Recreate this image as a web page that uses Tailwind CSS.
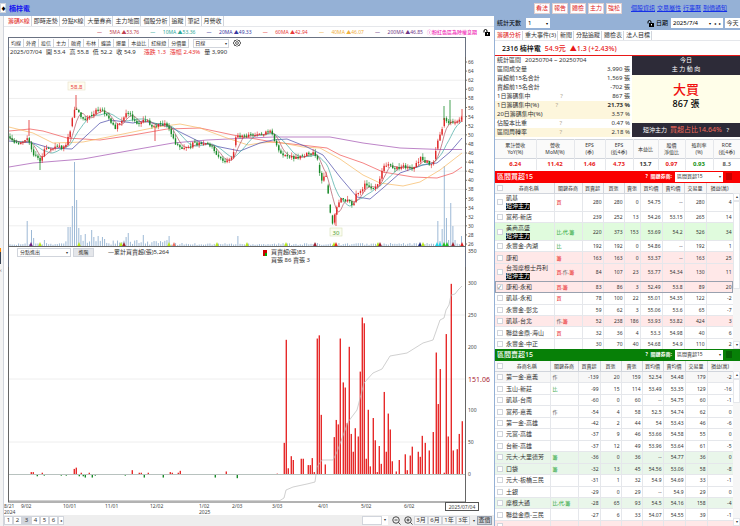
<!DOCTYPE html>
<html lang="zh-Hant">
<head>
  <meta charset="utf-8" />
  <meta name="viewport" content="width=device-width, initial-scale=1" />
  <title>楠梓電 籌碼K線</title>
  <script src="https://cdn.jsdelivr.net/npm/@tailwindcss/browser@4"></script>
</head>
<body class="bg-white font-['Noto_Sans','Noto_Sans_CJK_TC',sans-serif] text-[6px] leading-[9px] text-[#333] whitespace-nowrap overflow-hidden">
  <!-- Header -->
  <header class="flex items-center h-4 bg-[#95b1d6]">
    <button class="w-[6px] h-[10px] bg-white border border-gray-300 text-[5px] leading-[8px] text-black">♦</button>
    <h1 class="ml-[3px] text-[7px] font-bold text-[#1414f0]">楠梓電</h1>
    <div class="ml-auto w-[206px] flex items-center">
      <nav class="flex gap-[2px]">
        <button class="w-4 h-[11px] bg-white border border-[#e0d0d0] text-[#e02020]">看法</button>
        <button class="w-4 h-[11px] bg-white border border-[#e0d0d0] text-[#e02020]">報告</button>
        <button class="w-4 h-[11px] bg-white border border-[#e0d0d0] text-[#e02020]">體檢</button>
        <button class="w-4 h-[11px] bg-white border border-[#e0d0d0] text-[#e02020]">主力</button>
        <button class="w-4 h-[11px] bg-white border border-[#e0d0d0] text-[#e02020]">強松</button>
      </nav>
      <nav class="ml-[9px] flex gap-[2px] underline text-[#1530e8]">
        <a href="#">個股資訊</a><a href="#">交易屬性</a><a href="#">行事曆</a><a href="#">到價通知</a>
      </nav>
    </div>
  </header>

  <div class="flex">
    <!-- Left edge strip -->
    <div class="w-1 shrink-0 border-r border-gray-300 bg-[#f4f4f4] flex flex-col">
      <div class="mt-[232px] w-px h-1 bg-orange-400"></div>
      <div class="w-px h-3 bg-gray-700"></div>
      <div class="text-[5px] leading-[12px]">‹</div>
    </div>

    <!-- Chart side -->
    <main class="flex-1 min-w-0">
      <nav class="flex h-[11px] border-b border-gray-200 pl-[2px]">
        <button class="pl-[2px] pr-px text-[#e02020] border-r border-gray-300">籌碼K線</button>
        <button class="pl-[2px] pr-px border-r border-gray-300">即時走勢</button>
        <button class="pl-[2px] pr-px border-r border-gray-300">分點K線</button>
        <button class="pl-[2px] pr-px border-r border-gray-300">大量券商</button>
        <button class="pl-[2px] pr-px border-r border-gray-300">主力地圖</button>
        <button class="pl-[2px] pr-px border-r border-gray-300">個股分析</button>
        <button class="pl-[2px] pr-px border-r border-gray-300">追蹤</button>
        <button class="pl-[2px] pr-px border-r border-gray-300">筆記</button>
        <button class="pl-[2px] pr-px border-r border-gray-300">月營收</button>
      </nav>

      <!-- Moving average legend -->
      <div class="flex items-center h-[10px] pl-[93px] pr-1 text-[5px]">
        <div class="flex flex-1 justify-between pr-1">
          <span class="text-[#c04050]">—&emsp;&ensp;5MA ▲53.76</span>
          <span class="text-[#30a898]">—&emsp;&ensp;10MA ▲53.36</span>
          <span class="text-[#3838a0]">—&emsp;&ensp;20MA ▲49.33</span>
          <span class="text-[#e83838]">—&emsp;&ensp;60MA ▲42.94</span>
          <span class="text-[#f0b040]">—&emsp;&ensp;40MA ▲46.07</span>
          <span class="text-[#703888]">—&emsp;&ensp;200MA ▲46.85</span>
        </div>
        <span class="font-medium text-[#f030b8]">ⓘ粉紅色區為除權息期</span>
        <svg class="ml-[6px] w-[7px] h-[7px]" viewBox="0 0 14 14"><path d="M2 7V4a3 3 0 0 1 6 0v3" fill="none" stroke="#000" stroke-width="2"/><rect x="4" y="6" width="10" height="8" fill="#000"/><rect x="8" y="8" width="2" height="3" fill="#fff"/></svg>
      </div>

      <div class="ml-1 mr-7 h-5 border-t border-x border-gray-500">
        <div class="flex items-center h-[10px] text-[5px]">
          <button class="px-[2px] h-[9px] border-r border-b border-gray-300">均線</button>
          <button class="px-[2px] h-[9px] border-r border-b border-gray-300">外資</button>
          <button class="px-[2px] h-[9px] border-r border-b border-gray-300">投信</button>
          <button class="px-[2px] h-[9px] border-r border-b border-gray-300">主力</button>
          <button class="px-[2px] h-[9px] border-r border-b border-gray-300">融資</button>
          <button class="px-[2px] h-[9px] border-r border-b border-gray-300">布林</button>
          <button class="px-[2px] h-[9px] border-r border-b border-gray-300">纏論</button>
          <button class="px-[2px] h-[9px] border-r border-b border-gray-300">爆量</button>
          <button class="px-[2px] h-[9px] border-r border-b border-gray-300">本益比</button>
          <button class="px-[2px] h-[9px] border-r border-b border-gray-300">紅綠燈</button>
          <button class="px-[2px] h-[9px] border-r border-b border-gray-300">分價量</button>
          <label class="flex items-center ml-1 w-9 h-[9px] px-px border border-gray-300"><select aria-label="週期" class="appearance-none flex-1 min-w-0"><option>日線</option></select><span class="text-[4px]">▾</span></label>
          <svg class="ml-1 w-2 h-2" viewBox="0 0 16 16" fill="none" stroke="#333" stroke-width="1.6"><path d="M8 1l2 2 3 0 .5 3L16 8l-2.500 2-.5 3-3 0-2 2-2-2-3 0-.5-3L0 8l2.500-2 .5-3 3 0z"/><circle cx="8" cy="8" r="2.800"/></svg>
        </div>
        <div class="flex pl-px gap-1">
          <span>2025/07/04</span><span>開 53.4</span><span>高 55.8</span><span>低 52.2</span><span>收 54.9</span>
          <span class="pl-1 text-[#e83030]">漲跌 1.3</span><span class="text-[#e83030]">漲幅 2.43%</span><span>量 3,990</span>
        </div>
      </div>
      <svg id="kline" class="block w-full" viewBox="4 57 490 190" font-size="5"></svg>

      <div class="flex h-5 text-[#333]">
        <div class="flex-1 ml-1 border-x border-gray-500 flex items-start pt-px pl-2">
          <label class="flex items-center w-[54px] h-[9px] px-[2px] border border-gray-300 text-[5px]"><select aria-label="指標" class="appearance-none flex-1 min-w-0"><option>分點進出</option></select><span class="text-[4px]">▾</span></label>
          <button class="ml-[2px] w-[21px] h-[9px] bg-[#e4e6ea] border border-gray-300 text-[5px] leading-[7px]">進階</button>
          <span class="ml-[14px]">—累計買賣超(張)5,264</span>
          <svg class="ml-[94px] mt-[2px] w-1 h-[6px]" viewBox="0 0 4 6"><rect width="4" height="6" fill="#0a0"/><path d="M0 0h4v3H2v3H0z" fill="#c00"/></svg>
          <div class="ml-1 leading-[8px]"><div>買賣超(張)83</div><div>買張 86 賣張 3</div></div>
        </div>
        <div class="w-7 pl-[2px] text-[5px]">350</div>
      </div>
      <svg id="flow" class="block w-full" viewBox="4 267 490 248" font-size="5"></svg>

      <footer class="flex items-center h-[11px] bg-[#eee] pr-[2px]">
        <div class="flex text-center">
          <button class="w-[9px] h-[9px] leading-[7px] bg-white border border-gray-300">1</button>
          <button class="w-[9px] h-[9px] leading-[7px] bg-white border border-gray-300">2</button>
          <button class="w-[9px] h-[9px] leading-[7px] bg-gray-300 border border-gray-300">3</button>
          <button class="w-[9px] h-[9px] leading-[7px] bg-white border border-gray-300">4</button>
          <button class="w-[9px] h-[9px] leading-[7px] bg-white border border-gray-300">5</button>
          <button class="w-[9px] h-[9px] leading-[7px] bg-white border border-gray-300">6</button>
          <button class="w-[6px] h-[9px] leading-[7px] bg-white border border-gray-300 text-[4px]">◂</button>
        </div>
        <div class="ml-auto flex items-center">
          <input aria-label="股票代號" class="w-[20px] h-[9px] bg-white border border-gray-300" />
          <span class="w-[6px] h-[9px] leading-[8px] bg-white text-center text-[4px]">▾</span>
          <button aria-label="縮小" class="ml-[2px] w-[12px] h-[9px] flex justify-center"><svg class="w-[9px] h-[9px]" viewBox="0 0 18 18" fill="none" stroke="#222" stroke-width="1.6"><circle cx="8" cy="8" r="6.500"/><path d="M13 13l4 4M5 8h6"/></svg></button>
          <button aria-label="放大" class="w-[12px] h-[9px] flex justify-center"><svg class="w-[9px] h-[9px]" viewBox="0 0 18 18" fill="none" stroke="#222" stroke-width="1.6"><circle cx="8" cy="8" r="6.500"/><path d="M13 13l4 4M5 8h6M8 5v6"/></svg></button>
          <button class="w-[14px] h-[9px] leading-[7px] bg-[#f8f8f8] border border-gray-300">3月</button>
          <button class="w-[14px] h-[9px] leading-[7px] bg-[#f8f8f8] border border-gray-300">6月</button>
          <button class="w-[14px] h-[9px] leading-[7px] bg-[#f8f8f8] border border-gray-300">1年</button>
          <button class="w-[14px] h-[9px] leading-[7px] bg-[#f8f8f8] border border-gray-300">3年</button>
          <span class="w-[7px] text-center text-[4px]">▾</span>
          <button class="w-[15px] h-[9px] leading-[7px] bg-gray-300 border border-gray-400">查價</button>
        </div>
      </footer>
    </main>

    <!-- Broker side -->
    <aside class="w-[246px] shrink-0 border-l border-[#95b1d6]">
      <div class="flex items-center h-[14px] pl-[2px] bg-[#95b1d6] text-black">
        <label for="days">統計天數</label>
        <span class="flex items-center ml-[5px] w-6 h-[10px] px-[2px] bg-white"><select id="days" class="appearance-none flex-1 min-w-0"><option>1</option></select><span class="text-[4px]">▾</span></span>
        <svg class="ml-auto w-[7px] h-[7px]" viewBox="0 0 14 14"><path d="M2 7V4a3 3 0 0 1 6 0v3" fill="none" stroke="#000" stroke-width="2"/><rect x="4" y="6" width="10" height="8" fill="#000"/><rect x="8" y="8" width="2" height="3" fill="#fff"/></svg>
        <label for="date" class="ml-[2px]">日期</label>
        <span class="flex items-center gap-[3px] ml-[3px] w-[52px] h-[10px] px-[2px] bg-white"><input id="date" value="2025/7/4" class="flex-1 min-w-0" /><span class="text-[4px]">▾</span><span class="text-[4px]">◂</span><span class="text-[4px]">▸</span></span>
        <button class="ml-[2px] w-[15px] h-[10px] bg-white text-[#333]">今天</button>
      </div>
      <nav class="flex h-[11px] pt-px border-b border-gray-200">
        <button class="pl-[2px] pr-px text-[#e02020] border-r border-gray-300">籌碼分析</button>
        <button class="pl-[2px] pr-px border-r border-gray-300">重大事件(3)</button>
        <button class="pl-[2px] pr-px border-r border-gray-300">新聞</button>
        <button class="pl-[2px] pr-px border-r border-gray-300">分點追蹤</button>
        <button class="pl-[2px] pr-px border-r border-gray-300">體檢表</button>
        <button class="pl-[2px] pr-px border-r border-gray-300">法人目標</button>
      </nav>
      <div class="flex items-center gap-1 h-[15px] pl-[7px] border-b border-[#e81818] text-[7px] font-medium">
        <span class="text-black">2316 楠梓電</span>
        <span class="text-[#e81818]">54.9元</span>
        <span class="text-[#e81818]">▲1.3 (+2.43%)</span>
      </div>

      <div class="flex">
        <div class="flex-1 pr-[2px]">
          <div class="flex gap-1 pl-[2px]"><span>統計區間</span><span>20250704 ~ 20250704</span></div>
          <dl id="stats"></dl>
        </div>
        <div class="w-[108px] flex flex-col text-center">
          <div class="h-[19px] bg-[#2d2b38] text-white"><div>今日</div><div>主 力 動 向</div></div>
          <div class="flex-1 bg-[#fffee9] pt-[7px]">
            <div class="text-[13px] leading-[15px] font-medium text-[#f01010]">大買</div>
            <div class="text-[9px] leading-[14px] font-medium text-black">867 張</div>
          </div>
          <div class="h-[14px] leading-[14px] bg-[#2d2b38] text-white">短沖主力 &nbsp;<span class="text-[#f06858] text-[7px]">買超占比14.64%</span> &nbsp; ?</div>
        </div>
      </div>

      <table class="w-full mt-[2px] table-fixed text-center border-collapse">
        <colgroup><col class="w-[41px]"><col class="w-[38px]"><col class="w-[31px]"><col class="w-[28px]"><col class="w-[25px]"><col class="w-[27px]"><col class="w-[28px]"><col class="w-[27px]"></colgroup>
        <thead class="text-[5px] leading-[7px] bg-[#fafafa]">
          <tr class="h-[19px] border-y border-gray-300">
            <th class="font-normal border-r border-gray-200">累計營收<br>YoY(%)</th><th class="font-normal border-r border-gray-200">營收<br>MoM(%)</th><th class="font-normal border-r border-gray-200">EPS<br>(季)</th><th class="font-normal border-r border-gray-200">EPS<br>(近4季)</th><th class="font-normal border-r border-gray-200">本益比</th><th class="font-normal border-r border-gray-200">股價<br>淨值比</th><th class="font-normal border-r border-gray-200">殖利率<br>(%)</th><th class="font-normal">ROE<br>(近4季)</th>
          </tr>
        </thead>
        <tbody class="font-bold">
          <tr class="h-[11px]">
            <td class="text-[#e81818] border-r border-gray-200">6.24</td><td class="text-[#e81818] border-r border-gray-200">11.42</td><td class="text-[#e81818] border-r border-gray-200">1.46</td><td class="text-[#e81818] border-r border-gray-200">4.73</td><td class="border-r border-gray-200">13.7</td><td class="text-[#e81818] border-r border-gray-200">0.97</td><td class="text-[#109010] border-r border-gray-200">0.93</td><td class="font-medium">8.3</td>
          </tr>
        </tbody>
      </table>

      <!-- Net buyers -->
      <section class="mt-px">
        <div class="flex items-center h-[12px] pl-[2px] pr-[8px] bg-[#fa0000] text-white">
          <h2 class="text-[7px] font-medium">區間買超15</h2>
          <label for="buyKey" class="ml-auto font-bold text-[5px]">? &nbsp;關鍵券商:</label>
          <span class="flex items-center ml-[3px] w-12 h-[10px] px-[2px] bg-white text-[#333] text-[5px]"><select id="buyKey" class="appearance-none flex-1 min-w-0"><option>區間買超15</option></select><span class="text-[4px]">▾</span></span>
          <span class="ml-[3px] w-[6px] h-[7px] bg-[#c80000]"></span>
        </div>
        <div class="flex h-[166px]">
          <div class="flex-1 overflow-hidden"><table id="buy" class="w-full h-[168px] table-fixed border-collapse text-right text-[5px] leading-[8px]">
            <colgroup><col class="w-[9px]"><col class="w-[50px]"><col class="w-[28px]"><col class="w-[21px]"><col class="w-[21px]"><col class="w-[16px]"><col class="w-[22px]"><col class="w-[22px]"><col class="w-[22px]"><col class="w-[27px]"></colgroup>
          </table></div>
          <div class="w-[7px] pt-[10px] bg-[#f6f6f6] flex flex-col text-[4px] text-center"><span class="bg-white border border-gray-200 leading-[6px]">▴</span><span class="h-[88px] bg-white border border-gray-200"></span><span class="mt-auto leading-[6px] bg-white border border-gray-200">▾</span></div>
        </div>
      </section>

      <!-- Net sellers -->
      <section>
        <div class="flex items-center h-[12px] pl-[2px] pr-[8px] bg-[#078007] text-white">
          <h2 class="text-[7px] font-medium">區間賣超15</h2>
          <label for="sellKey" class="ml-auto font-bold text-[5px]">? &nbsp;關鍵券商:</label>
          <span class="flex items-center ml-[3px] w-12 h-[10px] px-[2px] bg-white text-[#333] text-[5px]"><select id="sellKey" class="appearance-none flex-1 min-w-0"><option>區間賣超15</option></select><span class="text-[4px]">▾</span></span>
          <span class="ml-[3px] w-[6px] h-[7px] bg-[#056005]"></span>
        </div>
        <div class="flex h-[165px]">
          <div class="flex-1 overflow-hidden"><table id="sell" class="w-full h-[172px] table-fixed border-collapse text-right text-[5px] leading-[8px]">
            <colgroup><col class="w-[9px]"><col class="w-[46px]"><col class="w-[28px]"><col class="w-[22px]"><col class="w-[21px]"><col class="w-[21px]"><col class="w-[21px]"><col class="w-[22px]"><col class="w-[22px]"><col class="w-[26px]"></colgroup>
          </table></div>
          <div class="w-[7px] pt-[10px] bg-[#f6f6f6] flex flex-col text-[4px] text-center"><span class="bg-white border border-gray-200 leading-[6px]">▴</span><span class="h-[24px] bg-white border border-gray-200"></span><span class="mt-auto leading-[6px] bg-white border border-gray-200">▾</span></div>
        </div>
      </section>
    </aside>
  </div>

  <script>
    // Summary rows: label, value, hint, highlighted, bold
    const stats = [
      ['區間成交量', '3,990 張'], ['買超前15名合計', '1,569 張'], ['賣超前15名合計', '-702 張'],
      ['1日籌碼集中', '867 張', 1], ['1日籌碼集中(%)', '21.73 %', 1, 1, 1], ['20日籌碼集中(%)', '3.57 %', 0, 1],
      ['佔股本比重', '0.47 %', 1], ['區間周轉率', '2.18 %', 1, 1]
    ];
    document.getElementById('stats').innerHTML = stats.map(([k, v, q, hl, b]) => `
      <div class="flex pl-[2px] ${hl ? 'bg-[#fdf6dc]' : ''}"><dt class="flex-1">${k}</dt>
      <span class="w-[52px] text-[#b0a890]">${q ? '?' : ''}</span><dd class="${b ? 'font-bold ' : ''}w-[24px] flex justify-end">${v}</dd></div>`).join('');

    // Brokers: name, key tags, numbers, row tint, short-term tag, ticked
    const buy = [
      ['凱基', '買', '280,280,0,54.75,--,280,4', '', 1],
      ['富邦-新店', '', '239,252,13,54.26,53.15,265,14'],
      ['美商高盛', '比,代,籌', '220,373,153,53.69,54.2,526,34', 'g', 1],
      ['永豐金-內湖', '比', '192,192,0,54.86,--,192,1'],
      ['康和', '籌', '163,163,0,53.37,--,163,25', 'r'],
      ['台灣摩根士丹利', '買,作,籌', '84,107,23,53.77,54.34,130,11', 'r', 1],
      ['康和-永和', '買,籌', '83,86,3,52.49,53.8,89,20', 'r', 0, 1],
      ['凱基-永和', '買', '78,100,22,55.01,54.35,122,-2'],
      ['永豐金-彰北', '', '59,62,3,55.06,53.6,65,-7'],
      ['凱基-台北', '作,籌', '52,238,186,53.93,53.82,424,3', 'r'],
      ['聯益金鼎-海山', '買', '32,36,4,53.3,54.98,40,6'],
      ['永豐金-中正', '', '30,70,40,54.68,54.9,110,2']
    ];
    const sell = [
      ['第一金-嘉義', '作', '-139,20,159,52.54,54.48,179,-2', 'n'],
      ['玉山-新莊', '比', '-99,15,114,53.49,53.35,129,-16'],
      ['凱基-台南', '', '-60,0,60,--,54.75,60,-1'],
      ['富邦-嘉義', '作', '-54,4,58,52.5,54.74,62,0'],
      ['第一金-高雄', '', '-42,2,44,54,53.43,46,-6'],
      ['元富-高雄', '', '-37,9,46,53.66,54.58,55,0'],
      ['台新-高雄', '', '-37,12,49,53.96,53.64,61,-5'],
      ['元大-大里德芳', '籌', '-36,0,36,--,54.77,36,0', 'g2'],
      ['口袋', '籌', '-32,13,45,54.56,53.06,58,-8', 'g2'],
      ['元大-板橋三民', '', '-31,1,32,54.9,54.69,33,-1'],
      ['土銀', '', '-29,0,29,--,54.9,29,0'],
      ['摩根大通', '比,代,籌', '-28,65,93,54.5,54.16,158,-4', 'g2'],
      ['聯益金鼎-三民', '', '-27,6,33,54.07,54.55,39,-1'],
      ['', '', ',,,,,,', 'r']
    ];
    const tint = { g: 'bg-[#e0fbdd]', g2: 'bg-[#e9f6ea]', r: 'bg-[#ffe8e8]', n: 'bg-[#f7f7f7]' };
    function fill(id, heads, rows) {
      const th = heads.map(h => `<th class="font-normal text-center border-r border-gray-300">${h}</th>`).join('');
      const box = 'appearance-none block mx-auto w-[6px] h-[6px] bg-white border border-gray-300';
      const body = rows.map(([name, key, nums, t, tag, on]) => {
        const keyColor = /比|代/.test(key) || t === 'g2' ? 'text-[#18a030]' : id === 'sell' ? '' : 'text-[#e82020]';
        const tick = on
          ? '<span class="grid"><input type="checkbox" checked aria-label="' + name + '" class="' + box + ' col-start-1 row-start-1"><span class="col-start-1 row-start-1 text-center text-[5px] leading-[6px]">✓</span></span>'
          : '<input type="checkbox" aria-label="' + name + '" class="' + box + '">';
        return `<tr class="${tag ? 'h-[17px]' : 'h-[11px]'} ${tint[t] || ''} ${on ? 'outline outline-gray-400 -outline-offset-1' : ''} border-b border-gray-200">
          <td>${tick}</td>
          <td class="pl-[2px] text-left text-[6px] leading-[8px] border-r border-gray-200">${name}${tag ? '<br><span class="inline-block bg-black text-white leading-[7px]">短沖主力</span>' : ''}</td>
          <td class="pl-[2px] text-left border-r border-gray-200 ${keyColor}">${key.replace('作', '<span class="text-[#555]">作</span>')}</td>
          ${nums.split(',').map(n => `<td class="pr-px border-r border-gray-200">${n}</td>`).join('')}</tr>`;
      }).join('');
      document.getElementById(id).insertAdjacentHTML('beforeend',
        `<thead><tr class="h-[11px] bg-[#f8f8f8] border-b border-gray-300"><th><input type="checkbox" aria-label="全選" class="${box}"></th>${th}</tr></thead><tbody>${body}</tbody>`);
    }
    const heads = ['券商名稱', '關鍵券商', '買賣超', '買張', '賣張', '買均價', '賣均價', '交易量', '損益(萬)'];
    fill('buy', heads, buy);
    fill('sell', heads, sell);

    // ---- Candles ----
    const line = (x1, y1, x2, y2, c, w = 1) => `<path d="M${x1} ${y1}L${x2} ${y2}" stroke="${c}" stroke-width="${w}" fill="none"/>`;
    const poly = (pts, c, w = 0.7) => `<polyline points="${pts.map(p => p.join(',')).join(' ')}" fill="none" stroke="${c}" stroke-width="${w}"/>`;
    const text = (x, y, s, extra = '') => `<text x="${x}" y="${y}" fill="#444" ${extra}>${s}</text>`;
    const noise = i => { const v = Math.sin(i * 127.1) * 43758.5453; return v - Math.floor(v); };
    const at = (pts, x) => {
      const k = Math.max(1, pts.findIndex(p => p[0] >= x));
      const [a, b] = [pts[k - 1], pts[k]];
      return a[1] + (b[1] - a[1]) * (x - a[0]) / (b[0] - a[0]);
    };
    const path = [[9,140],[20,143],[28,139],[32,153],[40,160],[45,148],[65,147],[70,133],[74,108],[78,112],[85,122],[92,115],[100,108],[108,117],[115,128],[122,121],[128,112],[137,124],[144,119],[155,127],[163,124],[169,127],[175,143],[185,149],[195,143],[210,145],[218,158],[227,162],[233,155],[236,136],[246,136],[262,134],[271,132],[276,145],[281,155],[290,157],[295,158],[303,155],[314,154],[318,162],[321,180],[326,175],[328,192],[330,209],[333,224],[335,213],[341,199],[349,202],[352,207],[356,196],[365,185],[373,188],[380,180],[382,170],[388,163],[395,169],[405,166],[412,169],[420,158],[428,163],[434,163],[437,145],[442,128],[444,118],[450,124],[456,122],[463,115]];
    const RED = '#e02828', GREEN = '#188a28';
    const closes = [];
    for (let i = 0; i < 211; i++) {
      const x = 10 + i * 2.15;
      closes.push([x, at(path, x) + (noise(i) - 0.5) * 4]);
    }
    const ma = n => closes.map(([x], i) => {
      const s = closes.slice(Math.max(0, i - n + 1), i + 1);
      return [x.toFixed(1), (s.reduce((t, p) => t + p[1], 0) / s.length).toFixed(1)];
    });
    let k = '';
    for (let p = 62; p >= 30; p -= 4) k += line(9, 62 + (66 - p) * 4.55, 465, 62 + (66 - p) * 4.55, '#eee');
    for (let p = 66; p >= 26; p -= 2) {
      const y = 62 + (66 - p) * 4.55;
      k += line(465, y, 467, y, '#777') + text(468, y + 2, p);
    }
    // volume
    const spikes = [[28,221],[31,230],[33,238],[44,240],[68,227],[70,227],[72,206],[74,162],[77,200],[79,228],[81,235],[85,234],[92,230],[94,237],[98,236],[102,237],[105,239],[128,233],[126,237],[143,235],[154,241],[169,236],[237,236],[438,221],[440,241],[442,229],[444,166],[446,218],[448,240],[450,203],[453,226],[455,240],[462,236]];
    closes.forEach(([x], i) => {
      const s = spikes.find(p => Math.abs(p[0] - x) < 1.08);
      const y = s ? s[1] : 245 - noise(i + 7) * ((x > 60 && x < 170) ? 5 : 2);
      k += line(x, 247, x, y, '#9db9d6');
    });
    k += poly([[9,167],[33,163],[83,159],[133,150],[173,143],[207,140],[250,138],[273,137],[330,137],[363,143],[400,148],[440,149.500],[462,149.500]], '#a050b0');
    k += poly([[9,131],[30,129],[43,131],[67,138],[100,140],[133,135],[167,129],[200,128],[233,135],[250,138],[273,142],[310,146],[327,148],[340,155],[363,163],[383,172],[413,177],[437,178],[453,173],[462,167]], '#f05050');
    k += poly([[9,127],[33,133],[53,143],[83,142],[123,134],[157,127],[180,124],[200,128],[227,138],[248,145],[260,143],[277,142],[303,147],[320,148],[340,159],[363,175],[380,183],[403,186],[420,182],[440,170],[462,153]], '#f6b860');
    k += poly([[9,141],[33,143],[50,148],[72,149],[87,135],[100,123],[110,120],[133,123],[143,121],[170,127],[200,142],[220,147],[240,151],[260,143],[273,140],[287,139],[307,147],[323,155],[340,177],[357,197],[370,199],[383,188],[400,173],[423,165],[437,163],[450,152],[462,138]], '#4848a8');
    k += poly(ma(10), '#40a8a0') + poly(ma(5), '#b05060');
    closes.forEach(([x, c], i) => {
      const o = i ? closes[i - 1][1] : c - 2;
      const col = c <= o ? RED : GREEN;
      const h = Math.min(Math.max(Math.abs(o - c), 1), 8);
      const top = c <= o ? c : c - h;
      k += line(x, top - noise(i + 3) * 4, x, top + h + noise(i + 5) * 3, col, 0.6);
      k += `<rect x="${(x - 0.7).toFixed(1)}" y="${top.toFixed(1)}" width="1.4" height="${h.toFixed(1)}" fill="${col}"/>`;
    });
    [[29,120,136,RED],[40,160,170,GREEN],[76,95,110,RED],[155,127,141,RED],[336,213,226,RED],[450,100,124,GREEN],[444,106,120,GREEN],[462,109,122,RED]]
      .forEach(([x, a, b, c]) => k += line(x, a, x, b, c, 0.8));
    // high / low flags
    k += `<rect x="68" y="82" width="17" height="8" fill="#fffdf0" stroke="#e8e0c8" stroke-width=".6"/>` + text(76.5, 88.5, '58.8', 'style="fill:#e84040" text-anchor="middle" font-size="6"');
    k += `<rect x="330" y="228" width="12" height="8" fill="#fbfdf0" stroke="#d8e0b8" stroke-width=".6"/>` + text(336, 234.5, '30', 'style="fill:#50a030" text-anchor="middle" font-size="6"');
    [[31,'#702080'],[40,'#b8e818'],[79,'#b8e818'],[121,'#b8e818'],[124,'#a02030'],[169,'#b8e818'],[174,'#f07060'],[217,'#b8e818'],[247,'#b8e818'],[286,'#b8e818'],[315,'#a02030'],[334,'#b8e818'],[336,'#e03020'],[378,'#b8e818'],[380,'#a02030'],[420,'#202880'],[423,'#b8e818'],[437,'#20d8e8'],[440,'#20d8e8'],[444,'#20c020'],[447,'#20c020'],[453,'#a02030'],[462,'#e02020']]
      .forEach(([x, c]) => k += `<path d="M${x - 2} 246.500L${x} 242L${x + 2} 246.500z" fill="${c}"/>`);
    k += line(8.5, 57, 8.5, 247, '#666') + line(465.5, 57, 465.5, 247, '#666') + line(8, 246.5, 466, 246.5, '#666');
    document.getElementById('kline').innerHTML = k;

    // ---- Net volume per day ----
    let f = '';
    [315, 379, 442].forEach(y => f += line(9, y, 465, y, '#eee'));
    f += line(9, 474.5, 465, 474.5, '#9aa8a4', 0.7);
    const bars = [[277,.6],[284,49],[286,211],[288,9],[291,28],[293,22],[301,24],[303,24],[308,14],[310,14],[312,25],[314,3],[317,213],[319,218],[321,93],[325,15],[334,58],[336,85],[338,78],[340,213],[343,144],[345,136],[347,80],[349,200],[351,63],[353,35],[355,72],[358,59],[360,161],[362,246],[364,237],[366,24],[368,101],[370,12],[373,88],[375,53],[377,3],[379,44],[381,16],[384,129],[386,35],[388,95],[390,70],[392,20],[396,4],[399,22],[405,31],[407,6],[410,29],[412,43],[418,35],[420,27],[422,60],[425,49],[429,37],[433,66],[436,191],[438,110],[440,165],[444,2],[446,220],[448,59],[451,299],[453,37],[457,39],[459,63],[462,83],
      [31,3],[33,3],[42,2],[74,8],[76,10],[81,2],[89,2],[132,6],[139,2],[141,2],[148,2],[170,3],[172,2],[178,2],[180,5],[226,4],
      [37,-2],[44,-1],[61,-1],[66,-1],[79,-2],[83,-2],[85,-4],[92,-4],[95,-1],[125,-1],[144,-4],[163,-4],[215,-4],[237,-5]];
    bars.forEach(([x, v]) => {
      const h = Math.abs(v) * 0.636;
      f += `<rect x="${x - 0.4}" y="${v > 0 ? 474 - h : 475}" width="1.4" height="${h}" fill="${v > 0 ? '#e62a2a' : GREEN}"/>`;
    });
    f += poly([[9,500.500],[280,500.500],[284,498],[286,490],[293,487],[307,484],[315,482],[317,467],[322,460],[333,460],[337,452],[348,422],[357,410],[364,383],[373,373],[382,369],[390,356],[407,353],[423,343],[433,340],[440,320],[444,318],[446,310],[449,305],[451,295],[455,294],[458,290],[462,286]], '#bbb');
    [300, 250, 200, 100, 50, 0].forEach(v => f += text(468, 476 - v * 0.636, v));
    f += text(468, 382, '151.06', 'style="fill:#a82030" font-size="7"');
    f += line(8.5, 267, 8.5, 502, '#666') + line(465.5, 267, 465.5, 502, '#666') + line(8, 502, 466, 502, '#666');
    [[4,'8/21'],[21,'9/02'],[63,'10/01'],[105,'11/01'],[150,'12/02'],[199,'1/02'],[232,'2/03'],[272,'3/03'],[318,'4/01'],[361,'5/02'],[404,'6/02']]
      .forEach(([x, d]) => f += text(x, 508, d));
    f += text(4, 514, '2024') + text(199, 514, '2025');
    f += `<rect x="445.500" y="502.500" width="33" height="8" fill="#fff" stroke="#555"/>` + text(462, 508.5, '2025/07/04', 'text-anchor="middle"');
    document.getElementById('flow').innerHTML = f;
  </script>
</body>
</html>
